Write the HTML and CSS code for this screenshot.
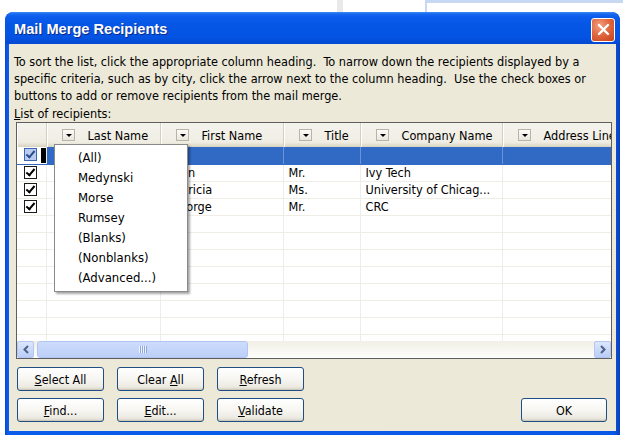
FILE: index.html
```html
<!DOCTYPE html>
<html lang="en">
<head>
<meta charset="utf-8">
<title>Mail Merge Recipients</title>
<link rel="stylesheet" href="styles.css">
</head>
<body>
<div class="desk">
  <div class="behind behind-a"></div>
  <div class="behind behind-b"></div>

  <div class="dialog">
    <div class="titlebar">
      <span class="title">Mail Merge Recipients</span>
      <span class="close">
        <svg width="13" height="13" viewBox="0 0 13 13"><path d="M2 2 L11 11 M11 2 L2 11" stroke="#fff" stroke-width="2.4" stroke-linecap="round"/></svg>
      </span>
    </div>

    <div class="content">
      <p class="intro">To sort the list, click the appropriate column heading.&nbsp; To narrow down the recipients displayed by a<br>specific criteria, such as by city, click the arrow next to the column heading.&nbsp; Use the check boxes or<br>buttons to add or remove recipients from the mail merge.</p>
      <div class="label"><u>L</u>ist of recipients:</div>

      <div class="listbox">
        <div class="grid">
          <table class="recipients">
            <colgroup>
              <col class="c-chk"><col class="c-last"><col class="c-first"><col class="c-title"><col class="c-company"><col class="c-addr">
            </colgroup>
            <thead>
              <tr>
                <th></th>
                <th><span class="drop"></span>Last Name</th>
                <th><span class="drop"></span>First Name</th>
                <th><span class="drop"></span>Title</th>
                <th><span class="drop"></span>Company Name</th>
                <th><span class="drop"></span>Address Line 1</th>
              </tr>
            </thead>
            <tbody>
              <tr class="selected">
                <td class="chk"><span class="box on"></span><span class="focus"></span></td>
                <td></td><td></td><td></td><td></td><td></td>
              </tr>
              <tr>
                <td class="chk"><span class="box on"></span></td>
                <td></td><td class="first">John</td><td>Mr.</td><td>Ivy Tech</td><td></td>
              </tr>
              <tr>
                <td class="chk"><span class="box on"></span></td>
                <td></td><td class="first">Patricia</td><td>Ms.</td><td>University of Chicag...</td><td></td>
              </tr>
              <tr>
                <td class="chk"><span class="box on"></span></td>
                <td></td><td class="first">George</td><td>Mr.</td><td>CRC</td><td></td>
              </tr>
              <tr><td></td><td></td><td></td><td></td><td></td><td></td></tr>
              <tr><td></td><td></td><td></td><td></td><td></td><td></td></tr>
              <tr><td></td><td></td><td></td><td></td><td></td><td></td></tr>
              <tr><td></td><td></td><td></td><td></td><td></td><td></td></tr>
              <tr><td></td><td></td><td></td><td></td><td></td><td></td></tr>
              <tr><td></td><td></td><td></td><td></td><td></td><td></td></tr>
              <tr><td></td><td></td><td></td><td></td><td></td><td></td></tr>
              <tr><td></td><td></td><td></td><td></td><td></td><td></td></tr>
            </tbody>
          </table>
        </div>

        <div class="hscroll">
          <span class="sb-btn">
            <svg width="8" height="9" viewBox="0 0 8 9"><path d="M6 1 L2.5 4.5 L6 8" fill="none" stroke="#4D6185" stroke-width="2"/></svg>
          </span>
          <span class="thumb"><span class="grip"></span></span>
          <span class="track"></span>
          <span class="sb-btn">
            <svg width="8" height="9" viewBox="0 0 8 9"><path d="M2 1 L5.5 4.5 L2 8" fill="none" stroke="#4D6185" stroke-width="2"/></svg>
          </span>
        </div>

        <ul class="filter-menu">
          <li>(All)</li>
          <li>Medynski</li>
          <li>Morse</li>
          <li>Rumsey</li>
          <li>(Blanks)</li>
          <li>(Nonblanks)</li>
          <li>(Advanced...)</li>
        </ul>
      </div>

      <div class="actions">
        <div class="btn-grid">
          <button class="btn"><u>S</u>elect All</button>
          <button class="btn">Clear <u>A</u>ll</button>
          <button class="btn"><u>R</u>efresh</button>
          <button class="btn"><u>F</u>ind...</button>
          <button class="btn"><u>E</u>dit...</button>
          <button class="btn"><u>V</u>alidate</button>
        </div>
        <button class="btn ok">OK</button>
      </div>
    </div>
  </div>
</div>
</body>
</html>
```

FILE: styles.css
```css
* { box-sizing: border-box; }

body {
  margin: 0;
  background: #fff;
  font-family: "DejaVu Sans Condensed", "DejaVu Sans", sans-serif;
  font-stretch: condensed;
  font-size: 12.6px;
  color: #000;
}

.desk {
  position: relative;
  width: 623px;
  height: 435px;
  overflow: hidden;
  padding: 12px 0 0 5px;
}

/* edges of the window sitting behind the dialog */
.behind { position: absolute; top: 0; height: 12px; }
.behind-a { left: 337px; width: 6px; background: #E9E9E9; }
.behind-b { left: 425px; width: 198px; border-left: 2px solid #C9D8F2; border-top: 3px solid #C9D8F2; }

/* dialog frame */
.dialog {
  width: 615px;
  height: 423px;
  display: flex;
  flex-direction: column;
  border-radius: 8px 8px 0 0;
  background: linear-gradient(90deg, #0747D2, #0C5CEC 3px, #0A58E6 99%, #0A3FB8);
  overflow: hidden;
}

.titlebar {
  height: 32px;
  flex: none;
  display: flex;
  align-items: center;
  justify-content: space-between;
  padding: 0 5px 0 9px;
  border-radius: 8px 8px 0 0;
  background: linear-gradient(180deg, #3C8CF6 0, #1768F0 2px, #0A5CEB 5px, #0656E6 40%, #0453E2 80%, #0348D0 100%);
}

.title {
  font-family: "Liberation Sans", Arial, sans-serif;
  font-stretch: normal;
  font-weight: bold;
  font-size: 14.6px;
  color: #fff;
  text-shadow: 1px 1px 0 #0A2B8A;
  padding-top: 2px;
}

.close {
  width: 24px;
  height: 24px;
  margin-top: 3px;
  display: flex;
  align-items: center;
  justify-content: center;
  border: 1px solid #fff;
  border-radius: 3px;
  background: radial-gradient(circle at 35% 30%, #F0A386 0, #E2693F 45%, #C6401B 100%);
}

.content {
  flex: 1;
  margin: 0 4px 4px 4px;
  background: #ECE9D8;
  padding: 9px 0 0 5px;
}

.intro {
  margin: 0;
  line-height: 17px;
  white-space: nowrap;
}

.label { line-height: 17px; padding-top: 1px; }

/* recipients list */
.listbox {
  position: relative;
  margin-left: 2px;
  width: 596px;
  height: 237px;
  border: 1px solid #5E5E5E;
  display: flex;
  flex-direction: column;
  background: #fff;
}

.grid { flex: 1; overflow: hidden; }

.recipients {
  table-layout: fixed;
  border-collapse: collapse;
  width: 620px;
}

.c-chk { width: 29px; }
.c-last { width: 114px; }
.c-first { width: 123px; }
.c-title { width: 77px; }
.c-company { width: 142px; }
.c-addr { width: 135px; }

.recipients th {
  height: 24px;
  padding: 0 0 0 15px;
  text-align: left;
  font-weight: normal;
  white-space: nowrap;
  overflow: hidden;
  background: linear-gradient(180deg, #F4F3EC 0, #EFEDE3 80%, #E2DECD 92%, #D6D2C2 100%);
  border-right: 1px solid #D3CFBF;
  box-shadow: inset 1px 0 0 #fff;
}

.drop {
  display: inline-block;
  vertical-align: middle;
  width: 13px;
  height: 12px;
  margin: -2px 13px 0 0;
  border: 1px solid #B9B5A6;
  background: linear-gradient(#FBFBF8, #E9E7DD);
  position: relative;
}
.drop::after {
  content: "";
  position: absolute;
  left: 3px;
  top: 4px;
  border-left: 3px solid transparent;
  border-right: 3px solid transparent;
  border-top: 3px solid #000;
}

.recipients td {
  height: 17px;
  padding: 0 0 0 5px;
  white-space: nowrap;
  overflow: hidden;
  border-bottom: 1px solid #EFEDE5;
  border-right: 1px solid #EFEDE5;
  line-height: 16px;
}

.recipients td.first { padding-left: 10px; }

.recipients td.chk {
  padding: 0 0 0 7px;
  position: relative;
}

.box {
  display: inline-block;
  vertical-align: middle;
  width: 13px;
  height: 13px;
  border: 1px solid #1B1B1B;
  background: #fff;
  position: relative;
  margin-top: -2px;
}
.box.on::after {
  content: "";
  position: absolute;
  left: 3px;
  top: 0px;
  width: 3px;
  height: 7px;
  border: solid #000;
  border-width: 0 2px 2px 0;
  transform: rotate(40deg);
}

.selected td {
  background: #316AC5;
  border-right-color: #6D93D3;
  border-bottom-color: #316AC5;
}
.selected td.chk {
  background: #fff;
  border-right-color: #EFEDE5;
}
.selected .box {
  background: #B9CCEF;
  border-color: #3B66B4;
}
.selected .box.on::after { border-color: #2A4D90; }

.focus {
  position: absolute;
  right: 0;
  top: 1px;
  width: 5px;
  height: 15px;
  background: #000;
}

/* horizontal scrollbar */
.hscroll {
  height: 17px;
  flex: none;
  display: flex;
  background: linear-gradient(180deg, #F1EFE6, #FDFDFA);
}

.sb-btn {
  width: 17px;
  height: 17px;
  flex: none;
  display: flex;
  align-items: center;
  justify-content: center;
  border: 1px solid #B4C7F0;
  border-radius: 2px;
  background: linear-gradient(180deg, #DCE6FD, #B9CDF8);
}

.thumb {
  width: 211px;
  margin-left: 3px;
  height: 17px;
  border: 1px solid #B0C5F3;
  border-radius: 3px;
  background: linear-gradient(180deg, #CDDCFC, #BCCFF8);
  display: flex;
  align-items: center;
  justify-content: center;
}
.grip {
  width: 8px;
  height: 7px;
  background: repeating-linear-gradient(90deg, #EEF3FE 0 1px, #8EA7DC 1px 2px);
}

.track { flex: 1; }

/* filter dropdown on the Last Name column */
.filter-menu {
  position: absolute;
  left: 37px;
  top: 21px;
  width: 134px;
  height: 148px;
  margin: 0;
  padding: 3px 0 0 23px;
  list-style: none;
  background: #fff;
  border: 1px solid #8A8A8A;
  box-shadow: 2px 2px 2px rgba(0, 0, 0, 0.35);
  font-size: 13px;
  z-index: 2;
}
.filter-menu li { line-height: 20px; }

/* buttons */
.actions {
  margin-top: 8px;
  display: flex;
  justify-content: space-between;
  align-items: flex-end;
  padding-right: 9px;
}

.btn-grid {
  margin-left: 3px;
  display: grid;
  grid-template-columns: repeat(3, 87px);
  column-gap: 13px;
  row-gap: 7px;
}

.btn {
  height: 24px;
  padding: 0;
  font: inherit;
  font-size: 12.4px;
  color: #000;
  border: 1px solid #1F4E85;
  border-radius: 3px;
  background: linear-gradient(180deg, #FFFFFF 0, #F7F6F2 50%, #ECEAE2 85%, #D8D3C6 100%);
  box-shadow: inset 0 -1px 0 #CFC9BA;
}

.btn.ok { width: 86px; }
```
